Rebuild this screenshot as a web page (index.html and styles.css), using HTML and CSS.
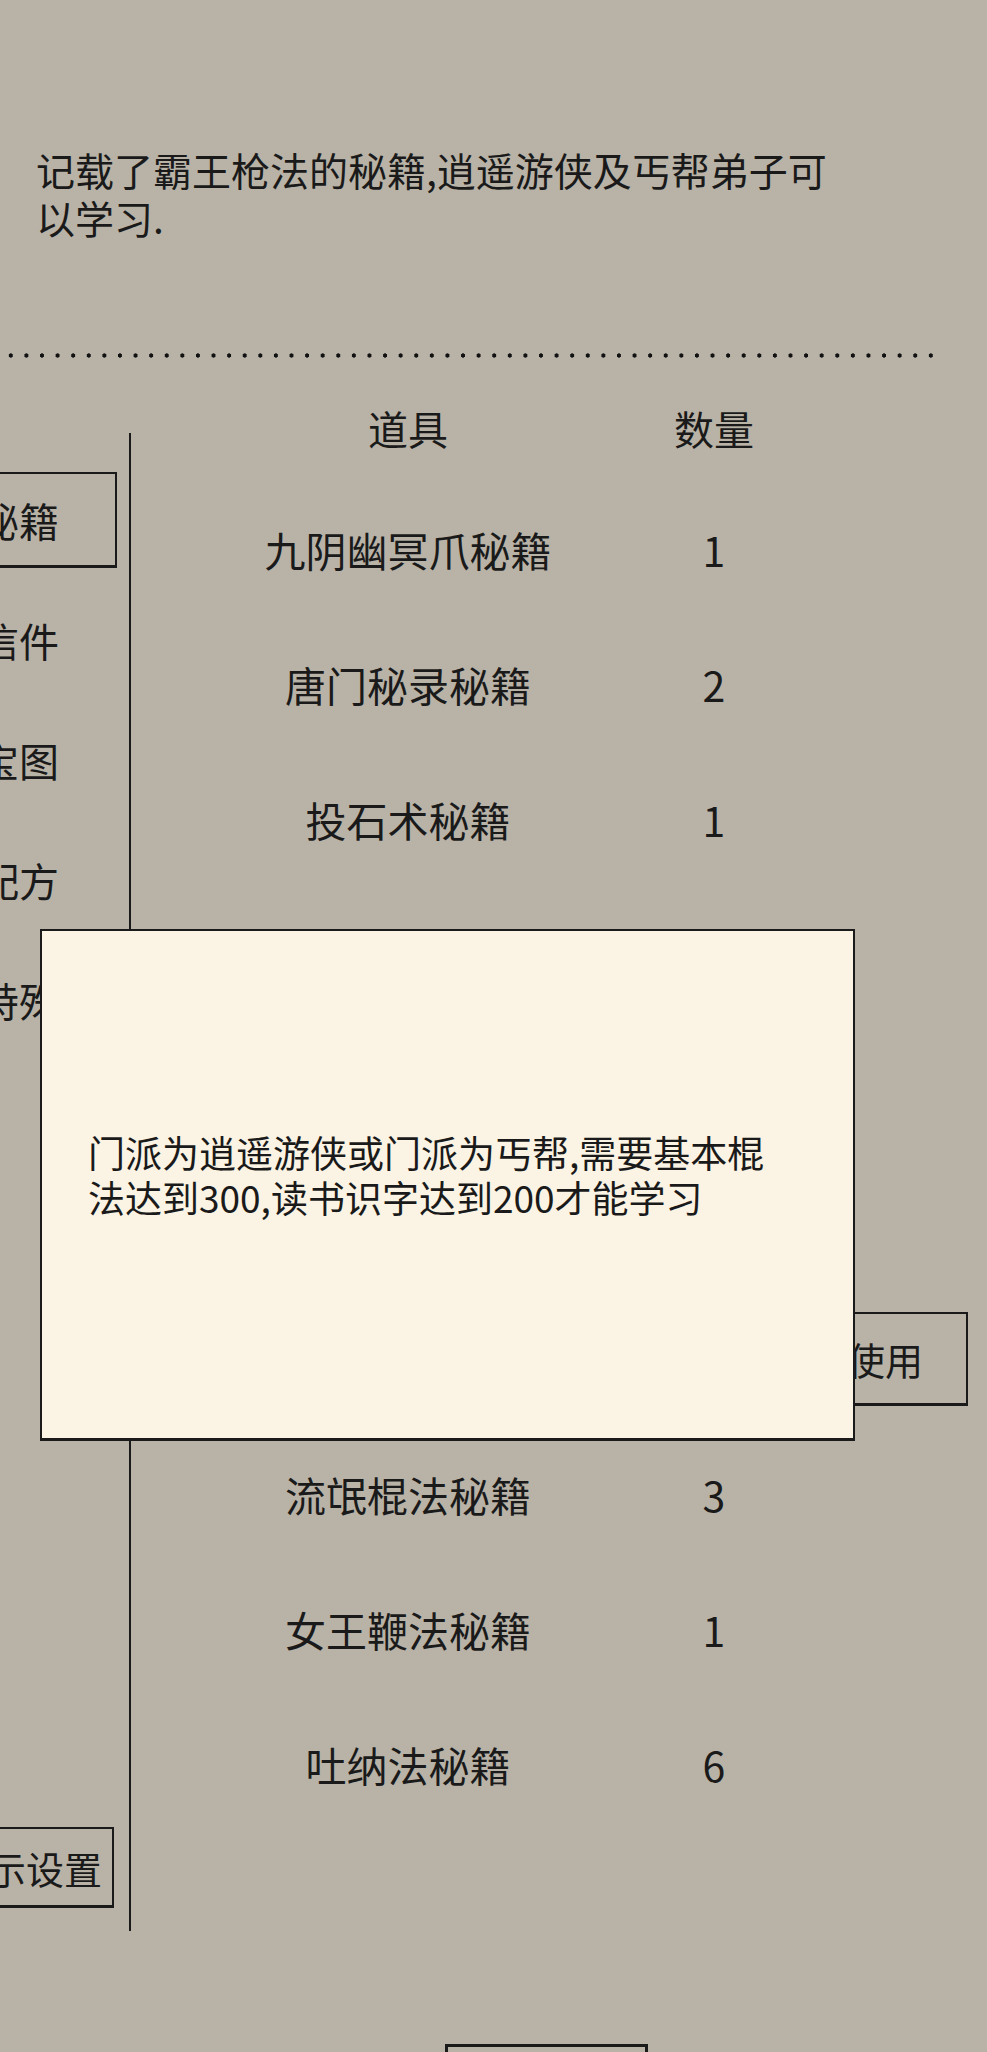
FILE: index.html
```html
<!DOCTYPE html>
<html lang="zh-CN">
<head>
<meta charset="utf-8">
<title>背包</title>
<link rel="stylesheet" href="styles.css">
</head>
<body>
<div class="screen">
  <p class="desc">记载了霸王枪法的秘籍,逍遥游侠及丐帮弟子可以学习.</p>
  <div class="dots"></div>
  <div class="main">
    <aside class="side">
      <div class="tab active">秘籍</div>
      <div class="tab">信件</div>
      <div class="tab">宝图</div>
      <div class="tab">配方</div>
      <div class="tab">特殊</div>
      <div class="setting">显示设置</div>
    </aside>
    <section class="list">
      <div class="row head"><span class="name">道具</span><span class="qty">数量</span></div>
      <div class="row"><span class="name">九阴幽冥爪秘籍</span><span class="qty">1</span></div>
      <div class="row"><span class="name">唐门秘录秘籍</span><span class="qty">2</span></div>
      <div class="row"><span class="name">投石术秘籍</span><span class="qty">1</span></div>
      <div class="row"></div>
      <div class="row"></div>
      <div class="row"></div>
      <div class="row"><span class="name"></span><span class="qty"></span><span class="use">使用</span></div>
      <div class="row"><span class="name">流氓棍法秘籍</span><span class="qty">3</span></div>
      <div class="row"><span class="name">女王鞭法秘籍</span><span class="qty">1</span></div>
      <div class="row"><span class="name">吐纳法秘籍</span><span class="qty">6</span></div>
    </section>
  </div>
  <div class="footer"><div class="bottom-btn"></div></div>
  <div class="dialog">
    <p>门派为逍遥游侠或门派为丐帮,需要基本棍法达到300,读书识字达到200才能学习</p>
  </div>
</div>
</body>
</html>
```
FILE: styles.css
```css
html, body {
  margin: 0;
  padding: 0;
}
body {
  background: #b9b3a7;
  font-family: "Noto Sans CJK SC", "Noto Sans", sans-serif;
  color: #1a1a1a;
}
.screen {
  position: relative;
  width: 987px;
  height: 2052px;
  overflow: hidden;
}
.desc {
  margin: 0;
  padding: 145px 0 0 36px;
  width: 800px;
  font-size: 39px;
  line-height: 48px;
}
.dots {
  margin: 112px 0 0 3px;
  width: 940px;
  height: 5px;
  background: radial-gradient(circle, #111 1.9px, transparent 2.4px) 0 0 / 15.6px 5px repeat-x;
}
.main {
  display: flex;
  margin-top: 22px;
}
.side {
  flex: none;
  margin: 53px 0 0 -79px;
  width: 210px;
  height: 1498px;
  box-sizing: border-box;
  border-right: 2px solid #1a1a1a;
  padding-top: 39px;
  display: flex;
  flex-direction: column;
  gap: 24px;
}
.tab {
  width: 196px;
  height: 96px;
  box-sizing: border-box;
  display: flex;
  align-items: center;
  justify-content: center;
  font-size: 40px;
  white-space: nowrap;
}
.tab.active {
  border: 2px solid #1a1a1a;
  border-bottom-width: 3px;
}
.setting {
  margin: auto 0 23px 17px;
  width: 176px;
  height: 81px;
  box-sizing: border-box;
  border: 2px solid #1a1a1a;
  border-bottom-width: 3px;
  display: flex;
  align-items: center;
  justify-content: center;
  font-size: 38px;
  white-space: nowrap;
}
.list {
  flex: none;
  width: 856px;
}
.row {
  display: grid;
  grid-template-columns: 554px 58px 225px;
  align-items: center;
  height: 135px;
  font-size: 41px;
}
.row.head {
  height: 96px;
  margin-bottom: 5px;
  font-size: 40px;
}
.name, .qty {
  display: flex;
  justify-content: center;
  white-space: nowrap;
}
.use {
  margin-left: 59px;
  width: 166px;
  height: 94px;
  box-sizing: border-box;
  border: 2px solid #1a1a1a;
  border-bottom-width: 3px;
  display: flex;
  align-items: center;
  justify-content: center;
  font-size: 38px;
}
.footer {
  margin: 113px 0 0 445px;
}
.bottom-btn {
  width: 203px;
  height: 80px;
  box-sizing: border-box;
  border: 3px solid #1a1a1a;
  border-bottom: none;
}
.dialog {
  position: absolute;
  left: 40px;
  top: 929px;
  width: 815px;
  height: 512px;
  box-sizing: border-box;
  background: #fbf4e4;
  border: 2px solid #1a1a1a;
  border-bottom-width: 3px;
  display: flex;
  align-items: center;
  padding: 0 76px 20px 46px;
}
.dialog p {
  margin: 0;
  font-size: 37px;
  line-height: 45px;
}
```
